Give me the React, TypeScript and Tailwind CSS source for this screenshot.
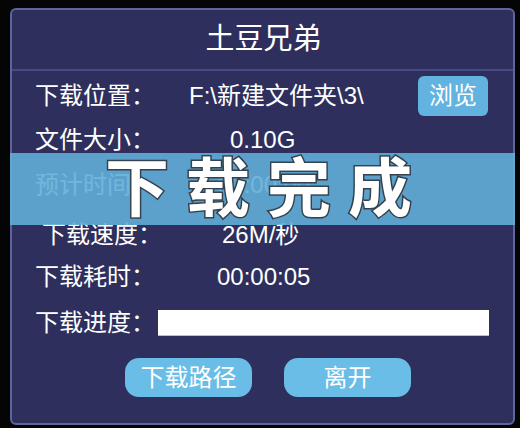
const font = "font-['Liberation_Sans','Noto_Sans_CJK_SC',sans-serif]";

function Row({ label, value, top, valueLeft, labelShift = 0 }: { label: string; value: string; top: number; valueLeft: number; labelShift?: number }) {
  return (
    <div className="flex h-[40px] items-center text-[24px] text-white" style={{ marginTop: top }}>
      <span className="shrink-0" style={{ marginLeft: labelShift }}>
        {label}
      </span>
      <span style={{ marginLeft: valueLeft }}>{value}</span>
    </div>
  );
}

export default function App() {
  return (
    <div className={`h-[428px] w-[520px] bg-[#050505] pl-[10px] pt-[8px] ${font}`}>
      <div className="relative h-[417px] w-[505px] rounded-[6px] border-2 border-[#5f649c] bg-[#2e2f5c]">
        <div className="flex h-[59px] items-center justify-center pl-[2px] text-[29px] text-white">土豆兄弟</div>
        <div className="h-[2px] bg-[#464c85]" />

        <div className="pl-[23px]">
          <div className="mt-[5px] flex h-[40px] items-center text-[24px] text-white">
            <span>下载位置：</span>
            <span className="ml-[34px]">F:\新建文件夹\3\</span>
            <button
              type="button"
              className="ml-auto mr-[25px] flex h-[40px] w-[70px] items-center justify-center rounded-[6px] bg-[#62b3df] text-[24px] text-white"
            >
              浏览
            </button>
          </div>
          <Row label="文件大小：" value="0.10G" top={4} valueLeft={75} />
          <Row label="预计时间：" value="00:00:00" top={5} valueLeft={62} />
          <Row label="下载速度：" value="26M/秒" top={10} valueLeft={60} labelShift={7} />
          <Row label="下载耗时：" value="00:00:05" top={2} valueLeft={62} />
          <div className="mt-[6px] flex h-[40px] items-center text-[24px] text-white">
            <span>下载进度：</span>
            <div className="ml-[3px] h-[26px] w-[331px] border-b border-[#bdbdbd] bg-white" />
          </div>
          <div className="mt-[15px] flex gap-[32px] pl-[90px]">
            <button
              type="button"
              className="flex h-[39px] w-[127px] items-center justify-center rounded-[14px] bg-[#6abde6] text-[24px] text-white"
            >
              下载路径
            </button>
            <button
              type="button"
              className="flex h-[39px] w-[127px] items-center justify-center rounded-[14px] bg-[#6abde6] text-[24px] text-white"
            >
              离开
            </button>
          </div>
        </div>

        <div className="absolute left-[-2px] top-[143px] flex h-[72px] w-[505px] items-center bg-[#62aed8]/90 pl-[95px]">
          <span className="text-[64px] font-bold leading-none tracking-[17px] text-white [paint-order:stroke_fill] [-webkit-text-stroke:3px_#34434f]">
            下载完成
          </span>
        </div>
      </div>
    </div>
  );
}
